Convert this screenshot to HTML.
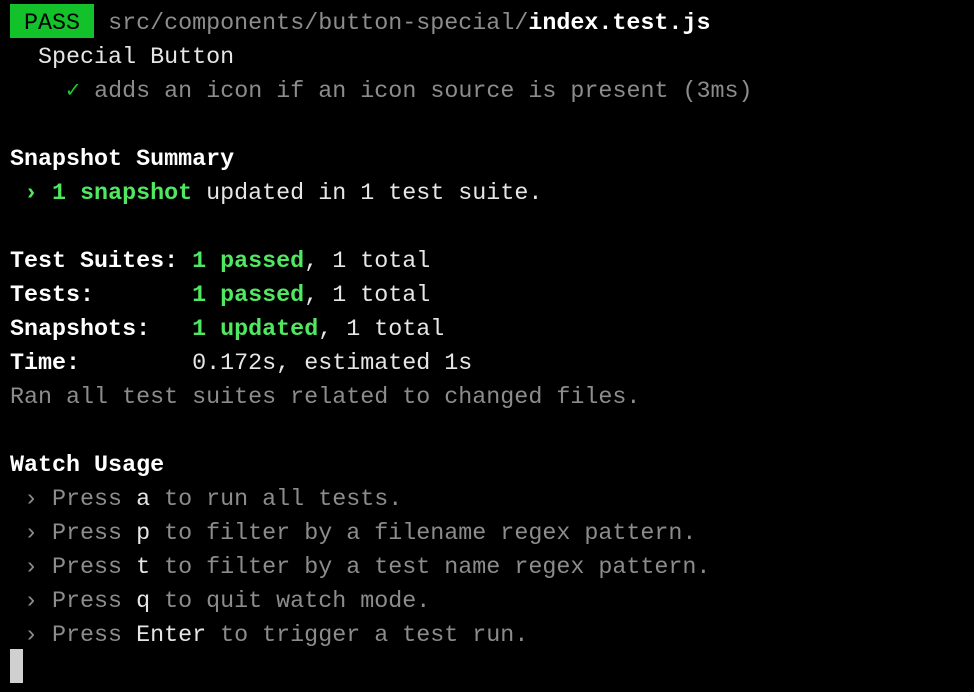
<!DOCTYPE html>
<html><head><style>
html,body{margin:0;background:#000;width:974px;height:692px;overflow:hidden}
pre{margin:0;padding:7px 0 0 10px;font-family:"Liberation Mono",monospace;font-size:23.35px;line-height:34px;color:#e6e6e6;white-space:pre}
.g{color:#8c8c8c}.b{font-weight:bold;color:#fff}.gr{color:#4fe860;font-weight:bold}.ck{color:#19c92e;font-weight:bold}
.pass{background:#13c22b;color:#000;padding:7px 0 1px}
.cur{display:inline-block;width:13px;height:34px;background:#d0d0d0;vertical-align:top;margin-top:-4px}
</style></head><body><pre><span class="pass"> PASS </span> <span class="g">src/components/button-special/</span><span class="b">index.test.js</span>
  Special Button
    <span class="ck">✓</span> <span class="g">adds an icon if an icon source is present (3ms)</span>

<span class="b">Snapshot Summary</span>
 <span class="gr">› 1 snapshot</span> updated in 1 test suite.

<span class="b">Test Suites: </span><span class="gr">1 passed</span>, 1 total
<span class="b">Tests:       </span><span class="gr">1 passed</span>, 1 total
<span class="b">Snapshots:   </span><span class="gr">1 updated</span>, 1 total
<span class="b">Time:        </span>0.172s, estimated 1s
<span class="g">Ran all test suites related to changed files.</span>

<span class="b">Watch Usage</span>
<span class="g"> › Press </span>a<span class="g"> to run all tests.</span>
<span class="g"> › Press </span>p<span class="g"> to filter by a filename regex pattern.</span>
<span class="g"> › Press </span>t<span class="g"> to filter by a test name regex pattern.</span>
<span class="g"> › Press </span>q<span class="g"> to quit watch mode.</span>
<span class="g"> › Press </span>Enter<span class="g"> to trigger a test run.</span>
<span class="cur"></span></pre></body></html>
